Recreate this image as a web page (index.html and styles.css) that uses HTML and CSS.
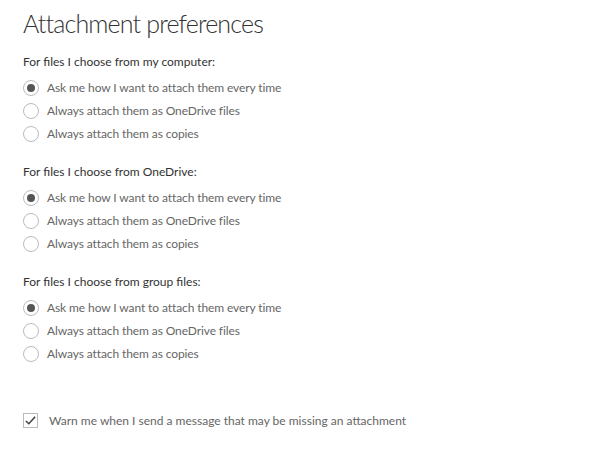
FILE: index.html
```html
<!DOCTYPE html>
<html lang="en">
<head>
  <meta charset="UTF-8" />
  <title>Attachment preferences</title>
  <link rel="stylesheet" href="styles.css">
</head>
<body>
  <h1>Attachment preferences</h1>

  <div class="grupo">
    <p class="rotulo">For files I choose from my computer:</p>
    <label class="opcao"><span class="radio on"></span>Ask me how I want to attach them every time</label>
    <label class="opcao"><span class="radio"></span>Always attach them as OneDrive files</label>
    <label class="opcao"><span class="radio"></span>Always attach them as copies</label>
  </div>

  <div class="grupo">
    <p class="rotulo">For files I choose from OneDrive:</p>
    <label class="opcao"><span class="radio on"></span>Ask me how I want to attach them every time</label>
    <label class="opcao"><span class="radio"></span>Always attach them as OneDrive files</label>
    <label class="opcao"><span class="radio"></span>Always attach them as copies</label>
  </div>

  <div class="grupo">
    <p class="rotulo">For files I choose from group files:</p>
    <label class="opcao"><span class="radio on"></span>Ask me how I want to attach them every time</label>
    <label class="opcao"><span class="radio"></span>Always attach them as OneDrive files</label>
    <label class="opcao"><span class="radio"></span>Always attach them as copies</label>
  </div>

  <label class="aviso">
    <span class="check">
      <svg width="13" height="13" viewBox="0 0 14 14"><path d="M2 7.5 L5.2 10.5 L12 3" fill="none" stroke="#444" stroke-width="1.7"/></svg>
    </span>
    Warn me when I send a message that may be missing an attachment
  </label>
</body>
</html>
```

FILE: styles.css
```css
body {
  font-family: 'Lato', sans-serif;
  background-color: #fff;
  color: #333;
  margin: 0;
  padding: 6px 23px;
}

h1 {
  font-weight: 300;
  font-size: 25px;
  letter-spacing: -0.85px;
  line-height: 34px;
  margin: 0 0 14px;
  color: #333;
}

.grupo {
  margin-bottom: 19px;
}

.rotulo {
  font-size: 12px;
  line-height: 16px;
  margin: 0 0 6px;
  color: #333;
}

.opcao {
  display: flex;
  align-items: center;
  gap: 8px;
  height: 23px;
  font-size: 12px;
  letter-spacing: -0.1px;
  color: #666;
}

.radio {
  width: 14px;
  height: 14px;
  border: 1px solid #bbb;
  border-radius: 50%;
  display: flex;
  align-items: center;
  justify-content: center;
}

.radio.on::after {
  content: "";
  width: 8px;
  height: 8px;
  border-radius: 50%;
  background-color: #555;
}

.aviso {
  display: flex;
  align-items: center;
  gap: 11px;
  height: 23px;
  margin-top: 44px;
  font-size: 12px;
  color: #666;
}

.check {
  width: 13px;
  height: 13px;
  border: 1px solid #bbb;
  display: flex;
  align-items: center;
  justify-content: center;
}
```
